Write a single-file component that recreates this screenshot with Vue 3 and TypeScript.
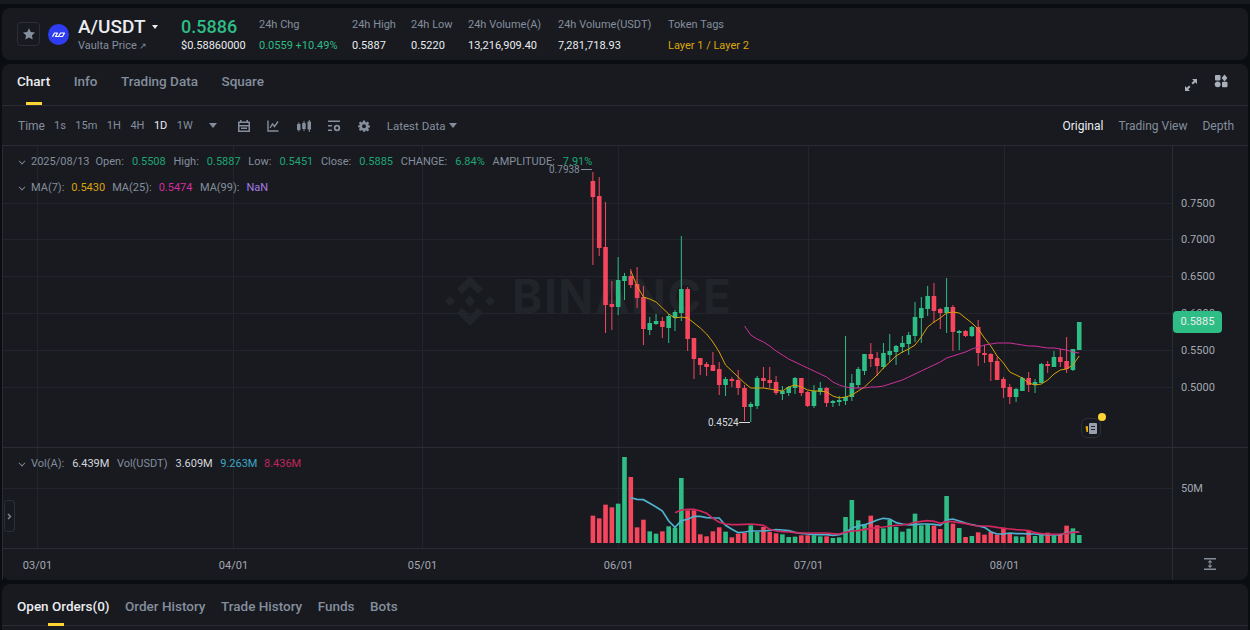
<template>
  <div class="page">
    <div class="top-strip"></div>

    <header class="ticker card">
      <button class="star-btn">
        <svg width="14" height="14" viewBox="0 0 24 24" fill="currentColor">
          <path d="M12 2l3.100 6.600 7.200.9-5.300 4.900 1.400 7.100-6.400-3.600-6.400 3.600 1.400-7.100L1.700 9.500l7.200-.9z"></path>
        </svg>
      </button>
      <svg class="coin" width="21" height="21" viewBox="0 0 21 21">
        <circle cx="10.500" cy="10.500" r="10.500" fill="#2f3df2"></circle>
        <path d="M4.500 12.800L6.500 9h3L7.500 12.500h3L12.500 9h4l-2 3.500h-3" fill="none" stroke="#fff" stroke-width="1.200" stroke-linejoin="round"></path>
      </svg>
      <div class="symbol">
        <div class="pair">A/USDT <span class="pair-caret"></span></div>
        <div class="pair-sub">Vaulta Price <span class="ext">↗</span></div>
      </div>
      <div class="last-price">
        <div class="price-main">0.5886</div>
        <div class="price-usd">$0.58860000</div>
      </div>
      <div class="stats">
        <div v-for="s in stats" :key="s.label" class="stat" :class="s.cls">
          <span class="stat-label">{{ s.label }}</span>
          <span class="stat-value" :class="s.tone">{{ s.value }}</span>
        </div>
      </div>
    </header>

    <section class="chart-card card">
      <div class="tabs">
        <span v-for="(t, i) in chartTabs" :key="t" class="tab" :class="{ active: i === 0 }">{{ t }}</span>
        <div class="tabs-right">
          <svg width="14" height="14" viewBox="0 0 14 14" fill="#aab0ba">
            <path d="M8 1h5v5l-1.800-1.800-2.300 2.300-1.400-1.400 2.300-2.300zM6 13H1V8l1.800 1.800 2.300-2.300 1.400 1.400-2.300 2.300z"></path>
          </svg>
          <svg class="layout-icon" width="14" height="14" viewBox="0 0 14 14" fill="#aab0ba">
            <rect x="1" y="1" width="5.500" height="5.500" rx="1"></rect>
            <path d="M10.500.6l2.900 3.400-2.900 3.400L7.600 4z"></path>
            <circle cx="3.700" cy="10.300" r="2.900"></circle>
            <rect x="8" y="7.700" width="5.500" height="5.500" rx="1"></rect>
          </svg>
        </div>
      </div>

      <div class="toolbar">
        <span class="tb-time">Time</span>
        <span v-for="iv in intervals" :key="iv" class="tb-iv" :class="{ on: iv === '1D' }">{{ iv }}</span>
        <span class="caret tb-more"></span>
        <div class="tb-icons">
          <svg width="14" height="14" viewBox="0 0 14 14" fill="#848e9c">
            <path d="M3 1h1.500v1.500h5V1H11v1.500h2V13H1V2.500h2zM2.500 4v2h9V4zm0 3.500V11.500h9V7.500zM4 8.500h6V10H4z" fill-rule="evenodd"></path>
          </svg>
          <svg width="14" height="14" viewBox="0 0 14 14" fill="none" stroke="#848e9c" stroke-width="1.400">
            <path d="M2 1.500V12h10.500M4 9l2.500-4 2 2.500L12 2.500"></path>
          </svg>
          <svg width="16" height="14" viewBox="0 0 16 14" fill="#848e9c">
            <rect x="1" y="5" width="3.500" height="6" rx=".5"></rect><rect x="2.300" y="3.500" width="1" height="9"></rect>
            <rect x="6.200" y="4" width="3.500" height="6" rx=".5"></rect><rect x="7.500" y="2" width="1" height="10"></rect>
            <rect x="11.500" y="2.500" width="3.500" height="8" rx=".5"></rect><rect x="12.800" y="1" width="1" height="12"></rect>
          </svg>
          <svg width="14" height="14" viewBox="0 0 14 14" fill="#848e9c">
            <rect x="1" y="1.500" width="12" height="1.500"></rect>
            <rect x="1" y="6" width="4" height="1.500"></rect>
            <rect x="1" y="10.500" width="4" height="1.500"></rect>
            <circle cx="10" cy="9" r="2.300" fill="none" stroke="#848e9c" stroke-width="1.800"></circle>
          </svg>
          <svg class="gear" width="12" height="12" viewBox="0 0 24 24" fill="#848e9c">
            <path fill-rule="evenodd" d="M10 1h4l.7 3.200 1.900.8 2.800-1.800 2.800 2.800L20.400 8.800l.8 1.900L24 11.400v3.200l-2.800.7-.8 1.900 1.800 2.800-2.800 2.800-2.800-1.800-1.900.8L14 23.500h-4l-.7-2.700-1.900-.8-2.800 1.800-2.800-2.800 1.800-2.800-.8-1.900L0 14.600v-3.200l2.800-.7.8-1.900L1.800 6l2.800-2.800L7.400 5l1.900-.8zM12 8.500a4 4 0 100 8 4 4 0 000-8z"></path>
          </svg>
        </div>
        <span class="tb-latest">Latest Data</span>
        <span class="caret"></span>
        <div class="tb-views">
          <span v-for="(v, i) in views" :key="v" class="tb-view" :class="{ on: i === 0 }">{{ v }}</span>
        </div>
      </div>

      <div class="plot">
        <svg class="canvas" width="1246" height="434" viewBox="2 146 1246 434">
          <!-- watermark -->
          <g fill="#212429">
            <path d="M470 276l13 13-5 5-8-8-8 8-5-5zM470 326l13-13-5-5-8 8-8-8-5 5zM445 301l5-5 5 5-5 5zM495 301l-5-5-5 5 5 5zM470 295.500l5.500 5.500-5.500 5.500-5.500-5.500z"></path>
            <text x="512" y="313" class="mark">BINANCE</text>
          </g>

          <!-- grid -->
          <g stroke="#22252b" stroke-width="1">
            <line v-for="y in gridY" :key="y" x1="2" x2="1172" :y1="y + 0.5" :y2="y + 0.5"></line>
            <line x1="2" x2="1172" y1="488.500" y2="488.500"></line>
            <line v-for="g in dates" :key="g.t" :x1="g.x + 0.5" :x2="g.x + 0.5" y1="146" y2="548"></line>
          </g>

          <!-- candles -->
          <g v-for="(c, i) in candles" :key="i" :fill="c[4] ? up : down">
            <rect :x="cx(i) - 0.5" :y="c[0]" width="1" :height="c[3] - c[0]"></rect>
            <rect :x="cx(i) - 2.300" :y="c[1]" width="4.600" :height="Math.max(c[2] - c[1], 1)"></rect>
          </g>

          <polyline :points="line(ma7, 6)" class="ma" stroke="#d9a207"></polyline>
          <polyline :points="line(ma25, 24)" class="ma" stroke="#cf2f9c"></polyline>

          <!-- high / low tags -->
          <text x="549" y="173" class="tag-high">0.7938</text>
          <line x1="581" x2="592" y1="169.500" y2="169.500" stroke="#848e9c"></line>
          <text x="708" y="426" class="tag-low">0.4524</text>
          <line x1="739" x2="750" y1="422.500" y2="422.500" stroke="#d8dadd"></line>

          <!-- volume -->
          <rect
            v-for="(v, i) in volumes"
            :key="'v' + i"
            :x="cx(i) - 2.300"
            :y="543 - v[0] / 3"
            width="4.600"
            :height="v[0] / 3"
            :fill="v[1] ? up : down"
          ></rect>
          <polyline :points="volLine(volFast, 6)" class="vol-ma" stroke="#4fb3cf"></polyline>
          <polyline :points="volLine(volSlow, 13)" class="vol-ma" stroke="#d0275f"></polyline>

          <!-- axes -->
          <g stroke="#2a2d33" stroke-width="1">
            <line x1="2.500" x2="2.500" y1="146" y2="580"></line>
            <line x1="1172.500" x2="1172.500" y1="146" y2="580"></line>
            <line x1="2" x2="1248" y1="447.500" y2="447.500"></line>
            <line x1="2" x2="1248" y1="548.500" y2="548.500"></line>
          </g>
          <text v-for="p in prices" :key="p.t" x="1181" :y="p.y + 4" class="axis">{{ p.t }}</text>
          <text x="1181" y="492" class="axis">50M</text>
          <text v-for="g in dates" :key="'t' + g.t" :x="g.x + 0.5" y="569" class="axis" text-anchor="middle">{{ g.t }}</text>

          <!-- fit button -->
          <g fill="#848e9c">
            <rect x="1204" y="558" width="12" height="1.500"></rect>
            <rect x="1204" y="568.500" width="12" height="1.500"></rect>
            <path d="M1210 560l2.500 2.500h-2v3h2l-2.500 2.500-2.500-2.500h2v-3h-2z"></path>
          </g>
        </svg>

        <div class="legend row-1">
          <span class="chev"></span>
          <span class="lg lg-date">2025/08/13</span>
          <template v-for="l in ohlc" :key="l[0]">
            <span class="lg">{{ l[0] }}:</span><span class="lg-up">{{ l[1] }}</span>
          </template>
        </div>
        <div class="legend row-2">
          <span class="chev"></span>
          <span class="lg">MA(7):</span><span class="lg-ma7">0.5430</span>
          <span class="lg">MA(25):</span><span class="lg-ma25">0.5474</span>
          <span class="lg">MA(99):</span><span class="lg-ma99">NaN</span>
        </div>
        <div class="legend row-vol">
          <span class="chev"></span>
          <span class="lg">Vol(A):</span><span class="lg-val">6.439M</span>
          <span class="lg">Vol(USDT)</span><span class="lg-val">3.609M</span>
          <span class="lg-cyan">9.263M</span><span class="lg-rose">8.436M</span>
        </div>

        <div class="price-badge">0.5885</div>

        <div class="news-btn">
          <span class="news-dot"></span>
          <svg width="13" height="13" viewBox="0 0 13 13">
            <path d="M.5 4.500L3 4v6H1.500z" fill="#e5ac0c"></path>
            <rect x="4" y="1" width="8" height="11" rx="1" fill="#98a0ad"></rect>
            <rect x="6" y="4" width="4" height="1" fill="#23262c"></rect>
            <rect x="6" y="7" width="4" height="1" fill="#23262c"></rect>
          </svg>
        </div>

        <div class="side-handle">
          <svg width="5" height="7" viewBox="0 0 5 7" fill="none" stroke="#848e9c" stroke-width="1.400"><path d="M1 1l2.500 2.500L1 6"></path></svg>
        </div>
      </div>
    </section>

    <section class="orders card">
      <div class="order-tabs">
        <span v-for="(t, i) in orderTabs" :key="t" class="tab" :class="{ active: i === 0 }">{{ t }}</span>
      </div>
    </section>
  </div>
</template>

<script setup lang="ts">
const up = '#2ebd85'
const down = '#f6465d'

const stats = [
  { label: '24h Chg', value: '0.0559 +10.49%', tone: 'green', cls: 'c-chg' },
  { label: '24h High', value: '0.5887', tone: '', cls: 'c-high' },
  { label: '24h Low', value: '0.5220', tone: '', cls: 'c-low' },
  { label: '24h Volume(A)', value: '13,216,909.40', tone: '', cls: 'c-vola' },
  { label: '24h Volume(USDT)', value: '7,281,718.93', tone: '', cls: 'c-volu' },
  { label: 'Token Tags', value: 'Layer 1 / Layer 2', tone: 'gold', cls: 'c-tags' },
]

const chartTabs = ['Chart', 'Info', 'Trading Data', 'Square']
const orderTabs = ['Open Orders(0)', 'Order History', 'Trade History', 'Funds', 'Bots']
const intervals = ['1s', '15m', '1H', '4H', '1D', '1W']
const views = ['Original', 'Trading View', 'Depth']

const ohlc = [
  ['Open', '0.5508'],
  ['High', '0.5887'],
  ['Low', '0.5451'],
  ['Close', '0.5885'],
  ['CHANGE', '6.84%'],
  ['AMPLITUDE', '7.91%'],
]

const gridY = [203, 239, 276, 313, 350, 387]
const prices = [
  { t: '0.7500', y: 203 },
  { t: '0.7000', y: 239 },
  { t: '0.6500', y: 276 },
  { t: '0.6000', y: 313 },
  { t: '0.5500', y: 350 },
  { t: '0.5000', y: 387 },
]
const dates = [
  { t: '03/01', x: 37 },
  { t: '04/01', x: 233 },
  { t: '05/01', x: 422 },
  { t: '06/01', x: 618 },
  { t: '07/01', x: 808 },
  { t: '08/01', x: 1004 },
]

// high, body top, body bottom, low, green?
const candles: [number, number, number, number, number][] = [
  [172, 181, 197, 265, 0], [177, 196, 248, 256, 0], [202, 247, 305, 333, 0], [281, 304, 307, 330, 0],
  [257, 280, 307, 315, 1], [273, 276, 281, 300, 1], [269, 276, 285, 288, 0], [267, 284, 298, 308, 0],
  [286, 297, 329, 345, 0], [317, 323, 330, 335, 1], [314, 321, 324, 325, 1], [317, 321, 327, 338, 0],
  [314, 316, 328, 343, 1], [310, 312, 318, 331, 1], [236, 289, 313, 321, 1], [287, 289, 339, 351, 0],
  [338, 338, 359, 379, 0], [358, 358, 365, 375, 0], [362, 364, 367, 376, 0], [352, 365, 371, 371, 0],
  [362, 369, 385, 395, 0], [377, 379, 385, 396, 1], [377, 379, 381, 387, 0], [370, 380, 388, 395, 0],
  [385, 388, 407, 421, 0], [402, 404, 407, 422, 1], [376, 378, 406, 409, 1], [367, 378, 381, 388, 0],
  [367, 380, 383, 388, 0], [376, 382, 393, 395, 0], [386, 391, 394, 400, 1], [386, 387, 393, 396, 1],
  [377, 378, 388, 394, 1], [378, 378, 393, 396, 0], [391, 392, 406, 407, 0], [385, 391, 406, 408, 1],
  [382, 388, 392, 395, 1], [387, 388, 403, 407, 0], [400, 401, 403, 407, 1], [396, 400, 402, 406, 1],
  [336, 397, 401, 405, 1], [374, 383, 397, 401, 1], [367, 369, 385, 388, 1], [354, 354, 371, 375, 1],
  [343, 354, 359, 367, 0], [352, 358, 366, 376, 0], [343, 353, 367, 369, 1], [334, 351, 355, 362, 1],
  [345, 346, 352, 365, 1], [336, 343, 347, 353, 1], [332, 335, 344, 355, 1], [302, 317, 336, 342, 1],
  [297, 308, 318, 343, 1], [286, 296, 309, 316, 1], [283, 296, 311, 323, 0], [308, 309, 313, 329, 0],
  [278, 307, 313, 333, 1], [305, 307, 332, 351, 0], [330, 331, 333, 350, 1], [330, 331, 336, 337, 0],
  [326, 327, 336, 337, 1], [320, 327, 353, 366, 0], [345, 353, 355, 363, 0], [353, 354, 362, 381, 0],
  [357, 361, 380, 380, 0], [377, 379, 388, 398, 0], [384, 387, 397, 404, 0], [388, 389, 397, 402, 1],
  [377, 378, 391, 391, 1], [372, 378, 385, 392, 0], [379, 382, 385, 393, 1], [363, 364, 383, 383, 1],
  [361, 364, 366, 373, 0], [351, 357, 367, 367, 1], [349, 357, 362, 367, 0], [337, 361, 369, 373, 0],
  [349, 349, 370, 371, 1], [322, 322, 350, 350, 1],
]

const ma7 = [
  271, 286, 297, 299, 302, 308, 314, 318, 317, 318, 323, 328, 334, 342, 352, 365, 371, 377, 383,
  388, 388, 388, 389, 390, 391, 387, 385, 387, 390, 391, 391, 392, 396, 398, 397, 395, 391, 387,
  381, 375, 368, 362, 356, 352, 349, 345, 337, 327, 322, 318, 313, 312, 313, 318, 323, 329, 338,
  346, 356, 363, 372, 375, 378, 383, 385, 384, 380, 374, 370, 369, 365, 356,
]
const ma25 = [
  326, 335, 339, 342, 346, 351, 355, 359, 362, 365, 368, 371, 374, 377, 382, 385, 387, 388, 388,
  388, 387, 387, 386, 384, 382, 380, 377, 374, 371, 368, 365, 362, 358, 356, 354, 352, 349, 347,
  345, 344, 343, 343, 343, 344, 345, 346, 346, 347, 348, 348, 349, 350, 352, 353,
]

// bar height and green flag, height in thirds of a pixel
const volumes: [number, number][] = [
  [82, 0], [74, 0], [115, 0], [107, 0], [118, 1], [258, 1], [198, 0], [47, 0], [70, 0], [35, 1],
  [28, 1], [35, 0], [50, 1], [46, 1], [195, 1], [98, 0], [98, 0], [26, 0], [20, 0], [35, 0],
  [47, 0], [34, 1], [17, 0], [28, 0], [30, 0], [53, 1], [33, 1], [48, 0], [33, 0], [29, 0],
  [26, 1], [18, 1], [19, 1], [23, 0], [23, 0], [23, 1], [20, 1], [20, 0], [15, 1], [17, 1],
  [78, 1], [129, 1], [68, 1], [56, 1], [82, 0], [53, 0], [44, 1], [70, 1], [48, 1], [34, 1],
  [43, 1], [88, 1], [53, 1], [56, 1], [52, 0], [42, 0], [141, 1], [58, 0], [45, 1], [18, 0],
  [21, 1], [32, 0], [25, 0], [33, 0], [25, 0], [46, 0], [28, 0], [20, 1], [19, 1], [38, 0],
  [21, 1], [28, 1], [31, 0], [23, 1], [25, 0], [52, 0], [44, 1], [24, 1],
]
const volFast = [
  143, 148, 149, 160, 171, 183, 213, 232, 212, 208, 199, 199, 203, 204, 204, 226, 238, 248, 246,
  243, 243, 243, 241, 239, 240, 242, 247, 250, 252, 254, 254, 254, 256, 254, 248, 235, 228, 224,
  218, 210, 205, 207, 218, 222, 225, 224, 222, 222, 223, 226, 210, 207, 213, 219, 224, 228, 232,
  245, 252, 252, 249, 251, 251, 252, 252, 254, 254, 255, 254, 248, 247, 246,
]
const volSlow = [
  188, 180, 178, 178, 183, 190, 205, 217, 222, 224, 224, 223, 222, 224, 226, 238, 243, 245, 246,
  248, 249, 249, 249, 249, 249, 251, 252, 247, 243, 242, 238, 235, 233, 231, 228, 226, 225, 222,
  217, 214, 212, 214, 220, 215, 215, 218, 221, 225, 228, 228, 229, 232, 235, 237, 239, 240, 242,
  248, 251, 252, 253, 252, 250, 247, 246,
]

const cx = (i: number) => 592.9 + 6.316 * i

const line = (ys: number[], start: number) =>
  ys.map((y, i) => `${cx(i + start).toFixed(1)},${y}`).join(' ')

const volLine = (ys: number[], start: number) =>
  ys.map((y, i) => `${cx(i + start).toFixed(1)},${(450 + y / 3).toFixed(1)}`).join(' ')
</script>

<style>
html,
body {
  margin: 0;
  background: #0b0e11;
}
</style>

<style scoped>
.page {
  width: 1250px;
  height: 630px;
  overflow: hidden;
  display: flex;
  flex-direction: column;
  gap: 4px;
  background: #0b0e11;
  font-family: Roboto, "Liberation Sans", sans-serif;
  color: #848e9c;
  box-sizing: border-box;
}

.top-strip {
  height: 4px;
  background: #181a20;
}

.card {
  background: #181a20;
  border-radius: 8px;
  margin: 0 2px;
}

.ticker {
  height: 52px;
  flex: none;
  display: flex;
  align-items: center;
  padding-left: 15px;
}

.star-btn {
  width: 23px;
  height: 24px;
  padding: 0;
  display: flex;
  align-items: center;
  justify-content: center;
  background: transparent;
  border: 1px solid #2b2f36;
  border-radius: 4px;
  color: #848e9c;
}

.coin {
  margin-left: 8px;
}

.symbol {
  margin-left: 9px;
  width: 103px;
}

.pair {
  font-size: 19px;
  line-height: 24px;
  font-weight: 500;
  color: #eaecef;
  display: flex;
  align-items: center;
  gap: 7px;
}

.pair-caret {
  width: 0;
  height: 0;
  border: 3.500px solid transparent;
  border-top: 4px solid #eaecef;
  border-bottom: 0;
}

.pair-sub {
  font-size: 11px;
  line-height: 14px;
}

.ext {
  font-size: 9px;
}

.last-price {
  width: 78px;
}

.price-main {
  font-size: 18px;
  line-height: 24px;
  font-weight: 500;
  color: #2ebd85;
}

.price-usd {
  font-size: 11px;
  line-height: 14px;
  color: #eaecef;
}

.stats {
  display: flex;
  gap: 16px;
  margin-top: 3px;
}

.stat {
  display: flex;
  flex-direction: column;
  gap: 7px;
  font-size: 11px;
  line-height: 14px;
  white-space: nowrap;
}

.c-chg { width: 77px; }
.c-high { width: 43px; }
.c-low { width: 41px; }
.c-vola { width: 74px; }
.c-volu { width: 94px; }

.stat-value {
  color: #eaecef;
}

.stat-value.green {
  color: #2ebd85;
}

.stat-value.gold {
  color: #dca70d;
}

.chart-card {
  height: 516px;
  flex: none;
  display: flex;
  flex-direction: column;
}

.tabs {
  height: 41px;
  flex: none;
  display: flex;
  align-items: center;
  gap: 23.500px;
  padding: 0 15px;
  border-bottom: 1px solid #2a2d33;
}

.tab {
  position: relative;
  font-size: 13.500px;
  line-height: 17px;
  font-weight: 500;
  color: #848e9c;
}

.tabs .tab {
  margin-bottom: 6px;
}

.tab.active {
  color: #eaecef;
}

.tabs .tab.active::after {
  content: "";
  position: absolute;
  left: 9px;
  bottom: -15px;
  width: 16px;
  height: 3px;
  background: #fcd535;
}

.tabs-right {
  margin-left: auto;
  display: flex;
  gap: 16px;
  margin-right: 5px;
}

.layout-icon {
  margin-top: -4px;
}

.toolbar {
  height: 39px;
  flex: none;
  display: flex;
  align-items: center;
  padding: 0 16px;
  font-size: 12px;
  border-bottom: 1px solid #2a2d33;
}

.tb-time {
  margin-right: 9px;
}

.tb-iv {
  margin-right: 9.500px;
  font-size: 11px;
}

.tb-iv.on,
.tb-view.on {
  color: #eaecef;
}

.caret {
  width: 0;
  height: 0;
  border: 4px solid transparent;
  border-top: 5px solid #848e9c;
  border-bottom: 0;
}

.tb-more {
  margin-left: 7px;
}

.tb-icons {
  display: flex;
  align-items: center;
  gap: 15.500px;
  margin-left: 19.500px;
}

.gear {
  margin-left: 1px;
}

.tb-latest {
  margin: 0 4px 0 17px;
  font-size: 11.500px;
}

.tb-views {
  margin-left: auto;
  display: flex;
  gap: 15px;
  margin-right: -2px;
}

.plot {
  position: relative;
  flex: 1;
  min-height: 0;
}

.canvas {
  display: block;
}

.mark {
  font-family: Inter, sans-serif;
  font-size: 46px;
  font-weight: 700;
  letter-spacing: 1.500px;
}

.ma {
  fill: none;
  stroke-width: 1;
}

.vol-ma {
  fill: none;
  stroke-width: 1.700;
}

.axis {
  font-size: 11px;
  fill: #a3a8b0;
}

.tag-high {
  font-size: 10px;
  fill: #848e9c;
}

.tag-low {
  font-size: 10px;
  fill: #d8dadd;
}

.legend {
  position: absolute;
  left: 17px;
  display: flex;
  align-items: center;
  font-size: 11px;
  line-height: 14px;
  white-space: nowrap;
}

.row-1 { top: 9px; }
.row-2 { top: 35px; }
.row-vol { top: 311px; }

.chev {
  width: 5px;
  height: 5px;
  margin: -3px 6px 0 0;
  border-right: 1.400px solid #848e9c;
  border-bottom: 1.400px solid #848e9c;
  transform: rotate(45deg) scale(0.8);
}

.lg { margin-right: 8px; }
.lg-date { margin-right: 6px; }
.row-2 .lg { margin-right: 7px; }
.lg-up { margin-right: 7.700px; color: #1fa574; }
.lg-val { margin-right: 7.500px; color: #d4d7dc; }
.lg-ma7 { margin-right: 7px; color: #d9a207; }
.lg-ma25 { margin-right: 7.500px; color: #cf2f9c; }
.lg-ma99 { color: #a37de6; }
.lg-cyan { margin-right: 6.500px; color: #3ba8c5; }
.lg-rose { color: #c0265c; }

.price-badge {
  position: absolute;
  left: 1171px;
  top: 165px;
  width: 49px;
  height: 22px;
  border-radius: 4px;
  background: #2ebd85;
  color: #eaecef;
  font-size: 11px;
  line-height: 22px;
  text-align: center;
}

.news-btn {
  position: absolute;
  left: 1079px;
  top: 272px;
  width: 20px;
  height: 20px;
  display: flex;
  align-items: center;
  justify-content: center;
  border: 1px solid #2b2f36;
  border-radius: 6px;
  box-sizing: border-box;
}

.news-dot {
  position: absolute;
  right: -6px;
  top: -6px;
  width: 8px;
  height: 8px;
  border-radius: 50%;
  background: #fcd535;
}

.side-handle {
  position: absolute;
  left: 2px;
  top: 354px;
  width: 9px;
  height: 30px;
  display: flex;
  align-items: center;
  justify-content: center;
  border: 1px solid #2b2f36;
  border-radius: 3px;
}

.orders {
  flex: 1;
  min-height: 41px;
  border-radius: 8px 8px 0 0;
}

.order-tabs {
  height: 38px;
  padding: 3px 15px 0;
  display: flex;
  align-items: center;
  gap: 15.500px;
  border-bottom: 1px solid #2a2d33;
}

.orders .tab.active::after {
  content: "";
  position: absolute;
  left: 31px;
  bottom: -11px;
  width: 16px;
  height: 3px;
  background: #fcd535;
}
</style>
